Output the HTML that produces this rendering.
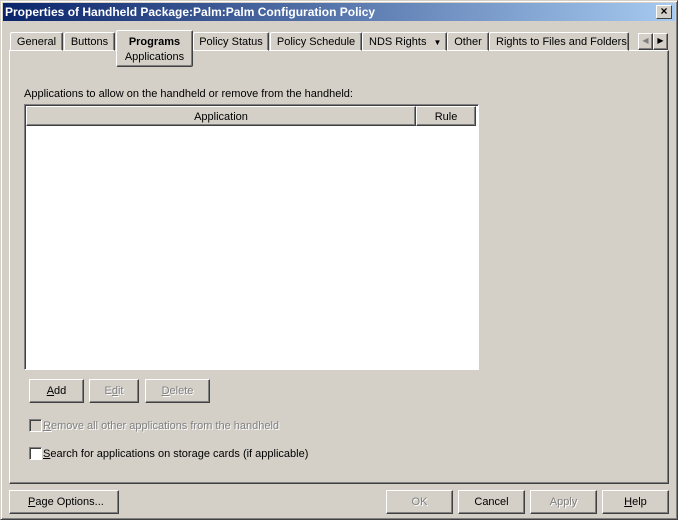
<!DOCTYPE html><html><head><style>
*{margin:0;padding:0;box-sizing:border-box}
body{width:678px;height:520px;background:#d4d0c8;font:11px "Liberation Sans",sans-serif;position:relative;overflow:hidden;color:#000}
.a{position:absolute}
.win{left:0;top:0;width:678px;height:520px;border:1px solid;border-color:#d4d0c8 #404040 #404040 #d4d0c8;box-shadow:inset 1px 1px #fff,inset -1px -1px #808080}
.title{left:3px;top:3px;width:672px;height:18px;background:linear-gradient(90deg,#0a246a,#a6caf0);color:#fff;font-weight:bold;font-size:12px;padding:2px 2px}
.x{left:656px;top:5px;width:16px;height:14px;background:#d4d0c8;border:1px solid;border-color:#fff #404040 #404040 #fff;font-size:12px;font-weight:bold;text-align:center;line-height:11px;color:#000}
.tab{top:32px;height:19px;border:1px solid;border-color:#fff #404040 transparent #fff;box-shadow:inset -1px 0 #808080;text-align:center;padding-top:3px;border-radius:2px 2px 0 0}
.panel{left:9px;top:50px;width:660px;height:434px;border:1px solid;border-color:#fff #404040 #404040 #fff;box-shadow:inset -1px -1px #808080}
.btn{height:24px;border:1px solid;border-color:#fff #404040 #404040 #fff;box-shadow:inset -1px -1px #808080;text-align:center;line-height:23px}
.dis{color:#808080;text-shadow:1px 1px #fff}
.cb{width:13px;height:13px;border:1px solid;border-color:#808080 #fff #fff #808080;box-shadow:inset 1px 1px #404040;background:#fff}
u{text-decoration:underline}
</style></head><body>
<div class="a win"></div>
<div class="a title">Properties of Handheld Package:Palm:Palm Configuration Policy</div>
<div class="a x">×</div>
<div class="a panel"></div>
<div class="a tab" style="left:10px;width:53px">General</div>
<div class="a tab" style="left:64px;width:51px">Buttons</div>
<div class="a tab" style="left:193px;width:76px">Policy Status</div>
<div class="a tab" style="left:270px;width:92px">Policy Schedule</div>
<div class="a tab" style="left:362px;width:85px;text-align:left;padding-left:6px">NDS Rights <span style="font-size:8px;margin-left:4px">▼</span></div>
<div class="a tab" style="left:447px;width:42px">Other</div>
<div class="a tab" style="left:489px;width:140px;text-align:left;padding-left:6px;overflow:hidden;white-space:nowrap">Rights to Files and Folders</div>
<div class="a" style="left:116px;top:30px;width:77px;height:37px;border:1px solid;border-color:#fff #404040 #404040 #fff;box-shadow:inset -1px -1px #808080;background:#d4d0c8;border-radius:2px;text-align:center;padding-top:4px;line-height:15px"><b>Programs</b><br>Applications</div>
<div class="a btn" style="left:638px;top:33px;width:15px;height:17px;line-height:14px;font-size:8px;color:#808080">◀</div>
<div class="a btn" style="left:653px;top:33px;width:15px;height:17px;line-height:14px;font-size:8px">▶</div>
<div class="a" style="left:24px;top:88px">Applications to allow on the handheld or remove from the handheld:</div>
<div class="a" style="left:24px;top:104px;width:455px;height:266px;background:#fff;border:1px solid;border-color:#808080 #fff #fff #808080;box-shadow:inset 1px 1px #404040"></div>
<div class="a btn" style="left:26px;top:106px;width:390px;height:20px;line-height:20px;background:#d4d0c8">Application</div>
<div class="a btn" style="left:416px;top:106px;width:60px;height:20px;line-height:20px;background:#d4d0c8">Rule</div>
<div class="a btn" style="left:29px;top:379px;width:55px"><u>A</u>dd</div>
<div class="a btn dis" style="left:89px;top:379px;width:50px">E<u>d</u>it</div>
<div class="a btn dis" style="left:145px;top:379px;width:65px"><u>D</u>elete</div>
<div class="a cb" style="left:29px;top:419px;background:#d4d0c8"></div>
<div class="a dis" style="left:43px;top:420px"><u>R</u>emove all other applications from the handheld</div>
<div class="a cb" style="left:29px;top:447px"></div>
<div class="a" style="left:43px;top:448px"><u>S</u>earch for applications on storage cards (if applicable)</div>
<div class="a btn" style="left:9px;top:490px;width:110px;text-align:left;padding-left:18px"><u>P</u>age Options...</div>
<div class="a btn dis" style="left:386px;top:490px;width:67px">OK</div>
<div class="a btn" style="left:458px;top:490px;width:67px">Cancel</div>
<div class="a btn dis" style="left:530px;top:490px;width:67px">Apply</div>
<div class="a btn" style="left:602px;top:490px;width:67px"><u>H</u>elp</div>
</body></html>
